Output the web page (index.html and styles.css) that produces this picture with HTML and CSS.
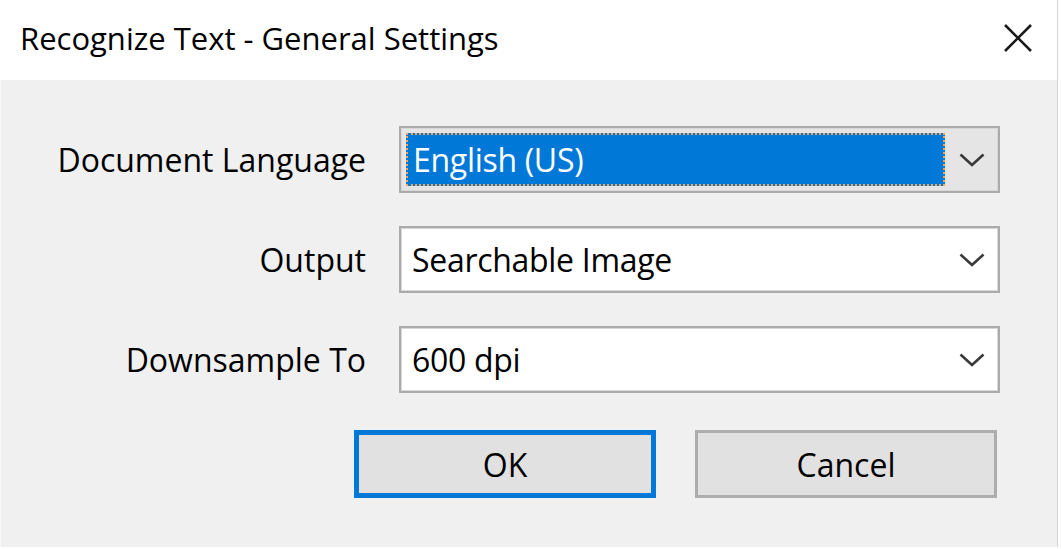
FILE: index.html
```html
<!DOCTYPE html>
<html>
<head>
<meta charset="utf-8">
<link rel="stylesheet" href="styles.css">
</head>
<body>
<div class="window">
  <div class="titlebar">
    <div class="title">Recognize Text - General Settings</div>
    <div class="close">
      <svg width="30" height="30" viewBox="0 0 30 30"><path d="M2 2 L28 28 M28 2 L2 28" stroke="#1a1a1a" stroke-width="2.6" fill="none"/></svg>
    </div>
  </div>
  <div class="content">
    <div class="form">
      <div class="label">Document Language</div>
      <div class="combo focused">
        <div class="value"><span class="sel">English (US)</span></div>
        <div class="arrow"><svg width="26" height="14" viewBox="0 0 26 14"><path d="M1.5 1.5 L13 12 L24.5 1.5" stroke="#3a3a3a" stroke-width="2.6" fill="none"/></svg></div>
      </div>
      <div class="label">Output</div>
      <div class="combo">
        <div class="value">Searchable Image</div>
        <div class="arrow"><svg width="26" height="14" viewBox="0 0 26 14"><path d="M1.5 1.5 L13 12 L24.5 1.5" stroke="#3a3a3a" stroke-width="2.6" fill="none"/></svg></div>
      </div>
      <div class="label">Downsample To</div>
      <div class="combo">
        <div class="value">600 dpi</div>
        <div class="arrow"><svg width="26" height="14" viewBox="0 0 26 14"><path d="M1.5 1.5 L13 12 L24.5 1.5" stroke="#3a3a3a" stroke-width="2.6" fill="none"/></svg></div>
      </div>
    </div>
    <div class="buttons">
      <div class="btn default">OK</div>
      <div class="btn">Cancel</div>
    </div>
  </div>
</div>
</body>
</html>
```
FILE: styles.css
```css
html, body {
  margin: 0;
  padding: 0;
  background: #ffffff;
}
body {
  font-family: "Open Sans", "Noto Sans", sans-serif;
  font-size: 32px;
  color: #000;
}
.window {
  width: 1057px;
  height: 547px;
  border-right: 1px solid #d6d6d6;
  display: flex;
  flex-direction: column;
}
.titlebar {
  height: 80px;
  flex: none;
  background: #fff;
  display: flex;
  align-items: center;
  justify-content: space-between;
  padding-left: 20px;
  padding-right: 24px;
}
.title {
  font-size: 31px;
  color: #000;
  margin-top: -4px;
}
.close {
  display: flex;
  width: 30px;
  height: 30px;
  margin-top: -4px;
}
.content {
  flex: 1;
  background: #f0f0f0;
  border-left: 1px solid #f8f8f8;
}
.form {
  display: grid;
  grid-template-columns: 365px 601px;
  column-gap: 33px;
  row-gap: 33px;
  padding-top: 46px;
}
.label {
  text-align: right;
  display: flex;
  align-items: center;
  justify-content: flex-end;
  height: 67px;
}
.combo {
  height: 67px;
  box-sizing: border-box;
  border: 2px solid #ababab;
  box-shadow: inset 0 0 0 1px #d8d8d8;
  background: #fff;
  display: flex;
  align-items: stretch;
}
.combo .value {
  flex: 1;
  display: flex;
  align-items: center;
  padding-left: 11px;
  letter-spacing: -0.3px;
}
.combo.focused {
  background: #e5e5e5;
}
.combo.focused .value {
  padding: 5px 0 5px 5px;
}
.combo .sel {
  flex: 1;
  align-self: stretch;
  display: flex;
  align-items: center;
  background: #0078d7;
  color: #fff;
  padding-left: 5px;
  border: 2px dotted #f2a552;
}
.arrow {
  width: 53px;
  display: flex;
  align-items: center;
  justify-content: center;
}
.buttons {
  display: flex;
  gap: 39px;
  padding-left: 353px;
  margin-top: 37px;
}
.btn {
  width: 302px;
  height: 68px;
  box-sizing: border-box;
  background: #e1e1e1;
  border: 3px solid #adadad;
  display: flex;
  align-items: center;
  justify-content: center;
}
.btn.default {
  border: 5px solid #0078d7;
}
```
